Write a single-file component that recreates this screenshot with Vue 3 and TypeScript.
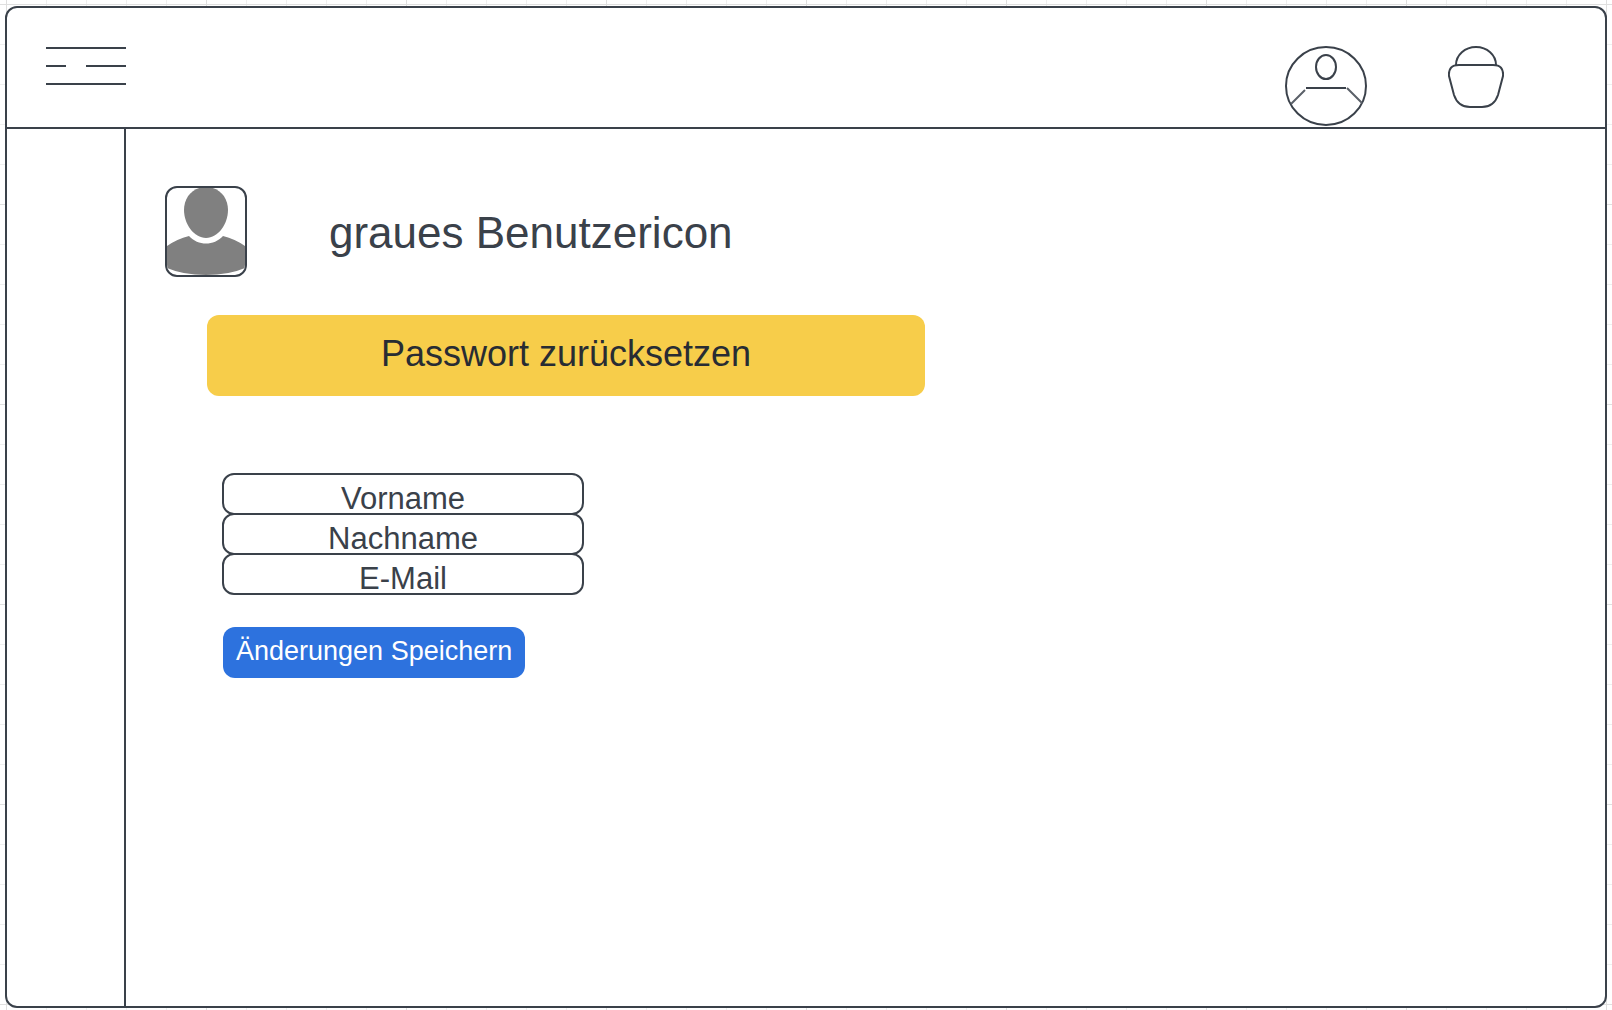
<script setup lang="ts">
import { reactive } from 'vue'

interface Field {
  id: string
  label: string
  value: string
}

const fields = reactive<Field[]>([
  { id: 'vorname', label: 'Vorname', value: 'Vorname' },
  { id: 'nachname', label: 'Nachname', value: 'Nachname' },
  { id: 'email', label: 'E-Mail', value: 'E-Mail' },
])
</script>

<template>
  <div class="canvas">
    <div class="window">
      <header class="topbar">
        <button class="icon-button" type="button" aria-label="Menü">
          <svg width="80" height="38" viewBox="0 0 80 38">
            <path d="M0 1H80M0 19H20M40 19H80M0 37H80" />
          </svg>
        </button>
        <nav class="actions" aria-label="Konto">
          <button class="icon-button" type="button" aria-label="Profil">
            <svg width="82" height="80" viewBox="0 0 82 80">
              <ellipse cx="41" cy="40" rx="40" ry="39" />
              <ellipse cx="41" cy="21" rx="10" ry="12" />
              <path d="M21 42H61" />
              <path class="thin" d="M20 44L6 58M62 42L77 57" />
            </svg>
          </button>
          <button class="icon-button" type="button" aria-label="Warenkorb">
            <svg width="56" height="62" viewBox="0 0 56 62">
              <path d="M8 19A20 18 0 0 1 48 19" />
              <path
                d="M11 19H45Q56 19 55 30L50 49Q46 61 34 61H22Q10 61 6 49L1 30Q0 19 11 19Z"
              />
            </svg>
          </button>
        </nav>
      </header>

      <div class="body">
        <aside class="sidebar"></aside>
        <main class="content">
          <div class="profile">
            <div class="avatar">
              <svg width="78" height="87" viewBox="0 0 78 87" aria-hidden="true">
                <path
                  d="M39 -1C52 -1 61 9 61 22C61 36 51 50 39 50C27 50 17 36 17 22C17 9 26 -1 39 -1Z"
                />
                <path
                  d="M0 58Q10 51 22 48C31 58 47 58 56 48Q68 51 78 58V80Q62 87 39 87Q16 87 0 80Z"
                />
              </svg>
            </div>
            <h1 class="name">graues Benutzericon</h1>
          </div>

          <button class="reset" type="button">Passwort zurücksetzen</button>

          <form class="form" @submit.prevent>
            <input
              v-for="field in fields"
              :id="field.id"
              :key="field.id"
              v-model="field.value"
              class="field"
              type="text"
              :aria-label="field.label"
            />
            <button class="save" type="submit">Änderungen Speichern</button>
          </form>
        </main>
      </div>
    </div>
  </div>
</template>

<style>
body {
  margin: 0;
}
</style>

<style scoped>
.canvas {
  --ink: #3a414a;
  box-sizing: border-box;
  display: flex;
  min-height: 100vh;
  padding: 6px 5px 2px;
  font-family: 'Liberation Sans', Arial, sans-serif;
  color: var(--ink);
  background-color: #fff;
  background-image:
    linear-gradient(to right, #dfdfdf 1px, transparent 1px),
    linear-gradient(to bottom, #dfdfdf 1px, transparent 1px),
    linear-gradient(to right, #efefef 1px, transparent 1px),
    linear-gradient(to bottom, #efefef 1px, transparent 1px);
  background-size: 200px 200px, 200px 200px, 40px 40px, 40px 40px;
  background-position: 6px 4px;
}

.window {
  box-sizing: border-box;
  display: flex;
  flex: 1;
  flex-direction: column;
  border: 2px solid var(--ink);
  border-radius: 12px;
  background: #fff;
}

.topbar {
  display: flex;
  align-items: flex-start;
  justify-content: space-between;
  height: 80px;
  padding: 38px 101px 1px 39px;
  border-bottom: 2px solid var(--ink);
}

.actions {
  display: flex;
  align-items: flex-start;
  gap: 81px;
}

.icon-button {
  display: block;
  padding: 0;
  border: 0;
  background: none;
  cursor: pointer;
}

svg {
  display: block;
}

.icon-button svg {
  fill: none;
  stroke: var(--ink);
  stroke-width: 2;
}

.icon-button .thin {
  stroke: #5b6169;
}

.topbar > .icon-button {
  padding-top: 1px;
}

.body {
  display: flex;
  flex: 1;
}

.sidebar {
  width: 117px;
  border-right: 2px solid var(--ink);
}

.content {
  flex: 1;
  padding: 57px 39px;
}

.profile {
  display: flex;
  align-items: center;
  gap: 82px;
}

.avatar {
  overflow: hidden;
  border: 2px solid var(--ink);
  border-radius: 12px;
}

.avatar svg {
  fill: #808080;
}

.name {
  margin: 0;
  padding-top: 2px;
  font-size: 44px;
  font-weight: 400;
  line-height: 52px;
}

.reset {
  display: block;
  width: 100%;
  max-width: 718px;
  height: 81px;
  margin: 38px 0 0 42px;
  padding: 0 0 4px;
  border: 0;
  border-radius: 12px;
  background: #f7cd4a;
  color: #282c33;
  font: 36px/40px 'Liberation Sans', Arial, sans-serif;
}

.form {
  display: flex;
  flex-direction: column;
  align-items: flex-start;
  margin: 77px 0 0 57px;
}

.field {
  box-sizing: border-box;
  width: 100%;
  max-width: 362px;
  height: 42px;
  margin: 0 0 -2px;
  padding: 10px 12px 0;
  border: 2px solid var(--ink);
  border-radius: 12px;
  background: transparent;
  color: var(--ink);
  font: 31px/32px 'Liberation Sans', Arial, sans-serif;
  text-align: center;
}

.save {
  height: 51px;
  margin: 34px 0 0 1px;
  padding: 0 13px 4px;
  border: 0;
  border-radius: 12px;
  background: #2d72de;
  color: #fff;
  font: 27px/32px 'Liberation Sans', Arial, sans-serif;
  white-space: nowrap;
}
</style>
